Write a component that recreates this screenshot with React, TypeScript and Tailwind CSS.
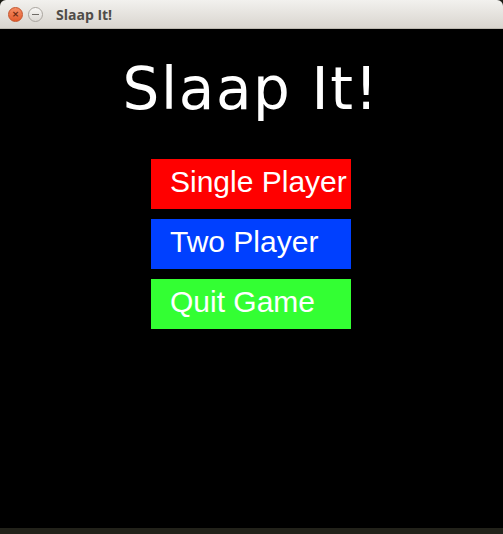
import React from "react";

export default function App() {
  return (
    <div className="w-[503px] h-[534px] bg-[#1a1a14] flex flex-col overflow-hidden">
      <div className="h-[528px] flex flex-col">
        <div className="h-[29px] rounded-t-[6px] bg-gradient-to-b from-[#f2f1ee] to-[#d9d5cf] border-b border-[#bcb8b0] flex items-center pl-[8px]">
          <div className="w-[15px] h-[15px] rounded-full bg-gradient-to-b from-[#f58d64] to-[#e35a2a] border border-[#c4532b] flex items-center justify-center">
            <span className="text-[#6b2a12] text-[9px] leading-none font-bold" style={{ fontFamily: '"DejaVu Sans", sans-serif' }}>×</span>
          </div>
          <div className="ml-[5px] w-[15px] h-[15px] rounded-full bg-gradient-to-b from-[#f8f7f5] to-[#dcd9d4] border border-[#a9a59f] flex items-center justify-center">
            <div className="w-[7px] h-[1px] bg-[#6f6c67]" />
          </div>
          <span
            className="ml-[13px] text-[14px] font-bold text-[#4f4c48]"
            style={{ fontFamily: '"Open Sans", "DejaVu Sans", sans-serif' }}
          >
            Slaap It!
          </span>
        </div>
        <div className="flex-1 bg-black flex flex-col items-center">
          <div
            className="mt-[31px] mr-[1px] text-white text-[58px] leading-none tracking-[1.6px]"
            style={{ fontFamily: '"DejaVu Sans", sans-serif' }}
          >
            Slaap It!
          </div>
          <div
            className="mt-[41px] mr-[1px] flex flex-col gap-[10px] w-[200px]"
            style={{ fontFamily: '"Liberation Sans", Arial, sans-serif' }}
          >
            <div className="h-[50px] bg-[#ff0000] text-white text-[30px] leading-none pl-[19px] pt-[8px]">Single Player</div>
            <div className="h-[50px] bg-[#0040ff] text-white text-[30px] leading-none pl-[19px] pt-[8px]">Two Player</div>
            <div className="h-[50px] bg-[#33ff33] text-white text-[30px] leading-none pl-[19px] pt-[8px]">Quit Game</div>
          </div>
        </div>
      </div>
      <div className="h-[6px] bg-[#22221a]" />
    </div>
  );
}
